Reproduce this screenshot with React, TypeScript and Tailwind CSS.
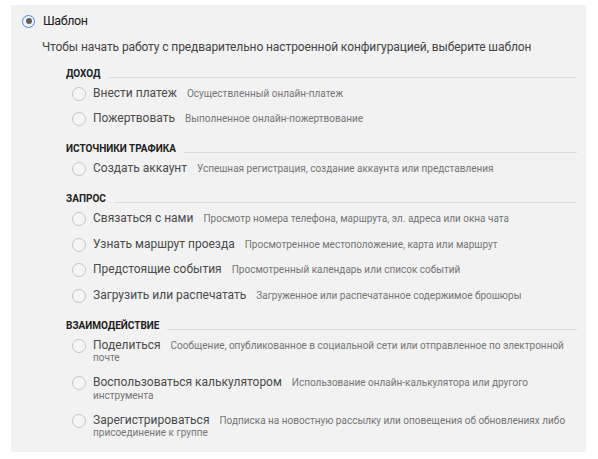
import React from "react";

type Item = { label: string; desc: string };
type Section = { title: string; items: Item[] };

const sections: Section[] = [
  {
    title: "Доход",
    items: [
      { label: "Внести платеж", desc: "Осуществленный онлайн-платеж" },
      { label: "Пожертвовать", desc: "Выполненное онлайн-пожертвование" },
    ],
  },
  {
    title: "Источники трафика",
    items: [
      { label: "Создать аккаунт", desc: "Успешная регистрация, создание аккаунта или представления" },
    ],
  },
  {
    title: "Запрос",
    items: [
      { label: "Связаться с нами", desc: "Просмотр номера телефона, маршрута, эл. адреса или окна чата" },
      { label: "Узнать маршрут проезда", desc: "Просмотренное местоположение, карта или маршрут" },
      { label: "Предстоящие события", desc: "Просмотренный календарь или список событий" },
      { label: "Загрузить или распечатать", desc: "Загруженное или распечатанное содержимое брошюры" },
    ],
  },
  {
    title: "Взаимодействие",
    items: [
      { label: "Поделиться", desc: "Сообщение, опубликованное в социальной сети или отправленное по электронной почте" },
      { label: "Воспользоваться калькулятором", desc: "Использование онлайн-калькулятора или другого инструмента" },
      { label: "Зарегистрироваться", desc: "Подписка на новостную рассылку или оповещения об обновлениях либо присоединение к группе" },
    ],
  },
];

const font = { fontFamily: "Roboto, 'Noto Sans', sans-serif" };

const App = () => {
  return (
    <div className="min-h-screen bg-white pt-[5px] pl-[11px]" style={font}>
      <div className="w-[575px] h-[447px] bg-[#f2f2f2] pt-[6px]">
        {/* Template option */}
        <div className="flex items-center h-[20px] pl-[11px]">
          <span className="w-[13px] h-[13px] rounded-full border-[1.5px] border-[#4285f4] flex items-center justify-center">
            <span className="w-[6px] h-[6px] rounded-full bg-[#5f5f5f]" />
          </span>
          <span className="ml-[8px] text-[12.5px] tracking-[-0.4px] leading-[20px] text-[#212121]">Шаблон</span>
        </div>
        <p className="mt-[8px] pl-[31px] text-[12px] tracking-[-0.1px] leading-[16px] text-[#444]">
          Чтобы начать работу с предварительно настроенной конфигурацией, выберите шаблон
        </p>

        {/* Sections */}
        <div className="mt-[11.5px] ml-[55px] mr-[9px] flex flex-col gap-[16px]">
          {sections.map((s) => (
            <div key={s.title}>
              <div className="flex items-end h-[14px]">
                <span className="text-[10px] leading-[14px] font-bold uppercase text-[#212121]">{s.title}</span>
                <span className="flex-1 h-px bg-[#dcdcdc] ml-[8px] mb-[3px]" />
              </div>
              <div className="mt-[6px] flex flex-col gap-[11.5px] pl-[6px]">
                {s.items.map((it) => (
                  <div key={it.label} className="flex items-start">
                    <span className="shrink-0 w-[14px] h-[14px] rounded-full border border-[#c4c4c4] bg-[#f5f5f5]" />
                    <div className="ml-[7px] text-[10px] leading-[12.5px] text-[#757575]">
                      <span className="text-[12px] leading-[12px] text-[#4a4a4a]">{it.label}</span>
                      <span className="ml-[10px]">{it.desc}</span>
                    </div>
                  </div>
                ))}
              </div>
            </div>
          ))}
        </div>
      </div>
    </div>
  );
};

export default App;
